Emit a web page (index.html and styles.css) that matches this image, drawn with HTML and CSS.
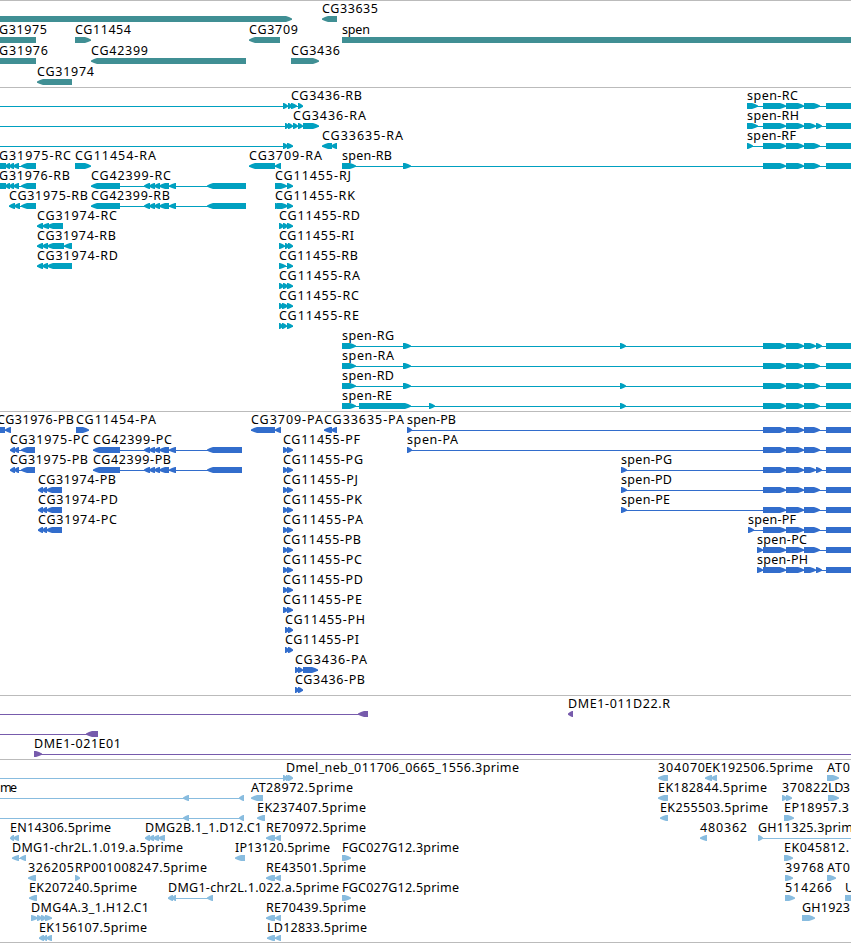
FILE: index.html
```
<!DOCTYPE html>
<html lang="en">
<head>
  <meta charset="UTF-8" />
  <title>Genome Browser</title>
  <link rel="stylesheet" href="styles.css">
</head>
<body>
  <div class="tracks">
    <div class="track genes" id="genes"></div>
    <div class="track transcripts" id="transcripts"></div>
    <div class="track cds" id="cds"></div>
    <div class="track clones" id="clones"></div>
    <div class="track ests" id="ests"></div>
  </div>

  <script src="script.js"></script>
</body>
</html>
```

FILE: styles.css
```
body {
  margin: 0;
  background-color: #fff;
  overflow: hidden;
}
.tracks {
  border-bottom: 1px solid #bbb;
}
.track {
  box-sizing: border-box;
  border-top: 1px solid #bbb;
  overflow: hidden;
}
.track svg {
  display: block;
  width: 100%;
  height: 100%;
}
.track text {
  font-family: "Noto Sans", sans-serif;
  font-size: 12.5px;
  fill: #000;
}
.track rect {
  shape-rendering: crispEdges;
}
.genes {
  height: 87px;
  fill: #408f94;
}
.transcripts {
  height: 324px;
  fill: #00a0c0;
}
.cds {
  height: 284px;
  fill: #326dcc;
}
.clones {
  height: 64px;
  fill: #775bac;
}
.ests {
  height: 183px;
  fill: #88bcdf;
}
```

FILE: script.js
```
// feature: [row, strand, [[start, end], ...], label, label start, label end]
const OFF = [-20, -10];

const spenEnd = [[763, 786], [786, 804], [804, 820], [826, 900]];
const spenEndSplit = [[763, 786], [786, 804], [804, 816], [816, 822], [826, 900]];
const mid42399 = [[144, 150], [149, 155], [154, 160], [159, 169], [169, 176]];
const left3197x = [[-20, 6], [5, 10], [9, 14], [13, 19], [21, 36]];
const pair = [[283, 288], [287, 293]];
const rePair = [[266, 275], [275, 281]];

const genes = [
  [0, '+', [[-20, 292]]],
  [0, '-', [[322, 337]], 'CG33635', 322, 378],
  [1, '-', [[-20, 36]], 'G31975', -1, 47],
  [1, '+', [[75, 91]], 'CG11454', 75, 131],
  [1, '-', [[249, 280]], 'CG3709', 249, 298],
  [1, '+', [[342, 900]], 'spen', 342, 370],
  [2, '-', [[-20, 36]], 'G31976', -1, 48],
  [2, '-', [[91, 246]], 'CG42399', 91, 148],
  [2, '+', [[291, 319]], 'CG3436', 291, 340],
  [3, '-', [[37, 72]], 'CG31974', 37, 94]
];

const transcripts = [
  [0, '+', [OFF, [283, 288], [288, 292], [291, 297], [298, 303]], 'CG3436-RB', 291, 362],
  [0, '+', [[747, 758], ...spenEnd], 'spen-RC', 747, 798],
  [1, '+', [OFF, [285, 289], [288, 293], [293, 298], [298, 303], [303, 319]], 'CG3436-RA', 293, 366],
  [1, '+', [[747, 758], ...spenEndSplit], 'spen-RH', 747, 799],
  [2, '+', [OFF, ...pair]],
  [2, '-', [[322, 332], [331, 337]], 'CG33635-RA', 322, 403],
  [2, '+', [[747, 753], ...spenEnd], 'spen-RF', 747, 796],
  [3, '-', left3197x, 'G31975-RC', -1, 71],
  [3, '+', [[75, 91]], 'CG11454-RA', 75, 156],
  [3, '-', [[249, 275], [275, 281]], 'CG3709-RA', 249, 322],
  [3, '+', [[342, 356], [403, 411], ...spenEnd], 'spen-RB', 342, 392],
  [4, '-', left3197x, 'G31976-RB', -1, 70],
  [4, '-', [[91, 120], ...mid42399, [207, 246]], 'CG42399-RC', 91, 171],
  [4, '+', [[275, 287], [287, 293]], 'CG11455-RJ', 275, 351],
  [5, '-', [[9, 15], [14, 20], [21, 36]], 'CG31975-RB', 9, 88],
  [5, '-', [[91, 120], ...mid42399, [207, 246]], 'CG42399-RB', 91, 170],
  [5, '+', [[275, 281], [277, 288], [287, 293]], 'CG11455-RK', 275, 355],
  [6, '-', [[37, 43], [42, 49], [47, 63]], 'CG31974-RC', 37, 117],
  [6, '+', [[279, 284], [283, 288], [287, 293]], 'CG11455-RD', 279, 360],
  [7, '-', [[37, 43], [42, 48], [47, 64], [64, 72]], 'CG31974-RB', 37, 116],
  [7, '+', [[279, 285], [285, 289], [288, 293]], 'CG11455-RI', 279, 354],
  [8, '-', [[37, 43], [42, 48], [47, 72]], 'CG31974-RD', 37, 118],
  [8, '+', [[279, 286], [287, 293]], 'CG11455-RB', 279, 358],
  [9, '+', [[279, 284], [283, 288], [287, 293]], 'CG11455-RA', 279, 360],
  [10, '+', [[279, 283], [282, 288], [287, 293]], 'CG11455-RC', 279, 359],
  [11, '+', [[279, 283], [282, 287], [287, 293]], 'CG11455-RE', 279, 359],
  [12, '+', [[342, 356], [403, 411], [620, 626], ...spenEndSplit], 'spen-RG', 342, 394],
  [13, '+', [[342, 356], [403, 411], ...spenEnd], 'spen-RA', 342, 394],
  [14, '+', [[342, 356], [403, 411], [620, 626], ...spenEnd], 'spen-RD', 342, 394],
  [15, '+', [[342, 356], [359, 411], [429, 435], [620, 626], ...spenEnd], 'spen-RE', 342, 392]
];

const cds = [
  [0, '-', [[-20, 5], [5, 11]], 'CG31976-PB', -3, 74],
  [0, '+', [[76, 89]], 'CG11454-PA', 76, 156],
  [0, '-', [[251, 275], [275, 281]], 'CG3709-PA', 251, 323],
  [0, '-', [[324, 332], [331, 337]], 'CG33635-PA', 324, 404],
  [0, '+', [[407, 412], ...spenEnd], 'spen-PB', 407, 456],
  [1, '-', [[10, 15], [14, 19], [21, 35]], 'CG31975-PC', 10, 89],
  [1, '-', [[93, 120], ...mid42399, [207, 242]], 'CG42399-PC', 93, 172],
  [1, '+', pair, 'CG11455-PF', 283, 360],
  [1, '+', [[407, 412], ...spenEnd], 'spen-PA', 407, 458],
  [2, '-', [[10, 15], [14, 19], [21, 35]], 'CG31975-PB', 10, 88],
  [2, '-', [[93, 120], ...mid42399, [207, 242]], 'CG42399-PB', 93, 171],
  [2, '+', pair, 'CG11455-PG', 283, 363],
  [2, '+', [[621, 627], ...spenEndSplit], 'spen-PG', 621, 672],
  [3, '-', [[38, 43], [42, 47], [46, 62]], 'CG31974-PB', 38, 116],
  [3, '+', pair, 'CG11455-PJ', 283, 358],
  [3, '+', [[621, 627], ...spenEnd], 'spen-PD', 621, 672],
  [4, '-', [[38, 43], [42, 47], [46, 62]], 'CG31974-PD', 38, 118],
  [4, '+', pair, 'CG11455-PK', 283, 362],
  [4, '+', [[621, 627], ...spenEnd], 'spen-PE', 621, 670],
  [5, '-', [[38, 43], [42, 47], [46, 62]], 'CG31974-PC', 38, 117],
  [5, '+', pair, 'CG11455-PA', 283, 363],
  [5, '+', [[748, 754], ...spenEnd], 'spen-PF', 748, 796],
  [6, '+', pair, 'CG11455-PB', 283, 361],
  [6, '+', [[757, 763], ...spenEnd], 'spen-PC', 757, 807],
  [7, '+', pair, 'CG11455-PC', 283, 362],
  [7, '+', [[757, 763], ...spenEndSplit], 'spen-PH', 757, 808],
  [8, '+', pair, 'CG11455-PD', 283, 363],
  [9, '+', pair, 'CG11455-PE', 283, 362],
  [10, '+', [[285, 289], [288, 293]], 'CG11455-PH', 285, 365],
  [11, '+', [[285, 289], [288, 293]], 'CG11455-PI', 285, 359],
  [12, '+', [[295, 299], [298, 303], [303, 318]], 'CG3436-PA', 295, 367],
  [13, '+', [[295, 299], [298, 303]], 'CG3436-PB', 295, 365]
];

const clones = [
  [0, '-', [OFF, [358, 368]]],
  [0, '-', [[568, 573]], 'DME1-011D22.R', 568, 670],
  [1, '-', [OFF, [86, 98]]],
  [2, '+', [[34, 42], [900, 910]], 'DME1-021E01', 34, 121]
];

const ests = [
  [0, '+', [OFF, [283, 287], [286, 290], [288, 293]], 'Dmel_neb_011706_0665_1556.3prime', 286, 519],
  [0, '-', [[658, 668]], '304070', 658, 705],
  [0, '-', [[705, 712], [711, 717]], 'EK192506.5prime', 705, 813],
  [0, '+', [[827, 839]], 'AT0', 827, 850],
  [1, '-', [OFF, [183, 189], [239, 244]], 'me', 0, 17],
  [1, '-', [[251, 263]], 'AT28972.5prime', 251, 353],
  [1, '-', [[658, 668]], 'EK182844.5prime', 658, 767],
  [1, '+', [[782, 787], [786, 792]], '370822', 782, 828],
  [1, '+', [[828, 839]], 'LD3', 828, 850],
  [2, '-', [OFF, [183, 189], [239, 244]]],
  [2, '-', [[257, 265]], 'EK237407.5prime', 257, 366],
  [2, '-', [[660, 668]], 'EK255503.5prime', 660, 768],
  [2, '+', [[784, 794]], 'EP18957.3', 784, 849],
  [3, '-', [[10, 14], [13, 19]], 'EN14306.5prime', 10, 111],
  [3, '-', [[145, 150], [149, 154], [153, 159], [158, 165]], 'DMG2B.1_1.D12.C1', 145, 262],
  [3, '-', rePair, 'RE70972.5prime', 266, 366],
  [3, '-', [[700, 707]], '480362', 700, 747],
  [3, '+', [[758, 763], [900, 910]], 'GH11325.3prim', 758, 853],
  [4, '-', [[12, 19], [20, 26]], 'DMG1-chr2L.1.019.a.5prime', 12, 183],
  [4, '-', [[235, 245]], 'IP13120.5prime', 235, 330],
  [4, '+', [[342, 351]], 'FGC027G12.3prime', 342, 459],
  [4, '+', [[784, 793]], 'EK045812.', 784, 849],
  [5, '-', [[28, 36]], '326205', 28, 74],
  [5, '+', [[75, 80]], 'RP001008247.5prime', 75, 207],
  [5, '-', rePair, 'RE43501.5prime', 266, 366],
  [5, '+', [[785, 793]], '39768', 785, 824],
  [5, '+', [[827, 836]], 'AT0', 827, 850],
  [6, '-', [[29, 37]], 'EK207240.5prime', 29, 137],
  [6, '-', [[168, 173], [172, 176], [207, 213]], 'DMG1-chr2L.1.022.a.5prime', 168, 339],
  [6, '+', [[342, 351]], 'FGC027G12.5prime', 342, 459],
  [6, '+', [[785, 795]], '514266', 785, 832],
  [6, '+', [[845, 900]], 'U', 845, 853],
  [7, '+', [[31, 38], [37, 42], [41, 46], [45, 52]], 'DMG4A.3_1.H12.C1', 31, 149],
  [7, '-', rePair, 'RE70439.5prime', 266, 366],
  [7, '+', [[802, 815]], 'GH1923', 802, 850],
  [8, '-', [[39, 44], [43, 47], [46, 52]], 'EK156107.5prime', 39, 147],
  [8, '-', [[267, 275], [275, 281]], 'LD12833.5prime', 267, 367]
];

// six pixels high, pointing in the direction of the strand
function arrow(start, end, y, strand) {
  const head = Math.min(6, end - start - 1);
  const tip = strand === '+' ? end : start;
  const tail = strand === '+' ? start : end;
  const back = strand === '+' ? -1 : 1;
  const neck = tip + back * head;
  const mid = tip + back * head / 2;
  const points = [
    [tail, y], [neck, y], [mid, y + 1], [tip, y + 2.5],
    [tip, y + 3.7], [mid, y + 5], [neck, y + 6], [tail, y + 6]
  ];
  return `<polygon points="${points.join(' ')}" />`;
}

function drawTrack(id, features, rowHeight) {
  let shapes = '';
  let labels = '';

  features.forEach(([row, strand, parts, label, from, to]) => {
    const y = 15 + row * rowHeight;
    const first = parts[0][0];
    const last = parts[parts.length - 1][1];

    if (parts.length > 1) {
      shapes += `<rect x="${first}" y="${y + 3}" width="${last - first}" height="1" />`;
    }
    parts.forEach(([start, end]) => {
      shapes += arrow(start, end, y, strand);
    });
    if (label) {
      labels += `<text x="${from}" y="${y - 3}" textLength="${to - from}">${label}</text>`;
    }
  });

  document.getElementById(id).innerHTML = `<svg>${shapes}${labels}</svg>`;
}

drawTrack('genes', genes, 21);
drawTrack('transcripts', transcripts, 20);
drawTrack('cds', cds, 20);
drawTrack('clones', clones, 20);
drawTrack('ests', ests, 20);
```
